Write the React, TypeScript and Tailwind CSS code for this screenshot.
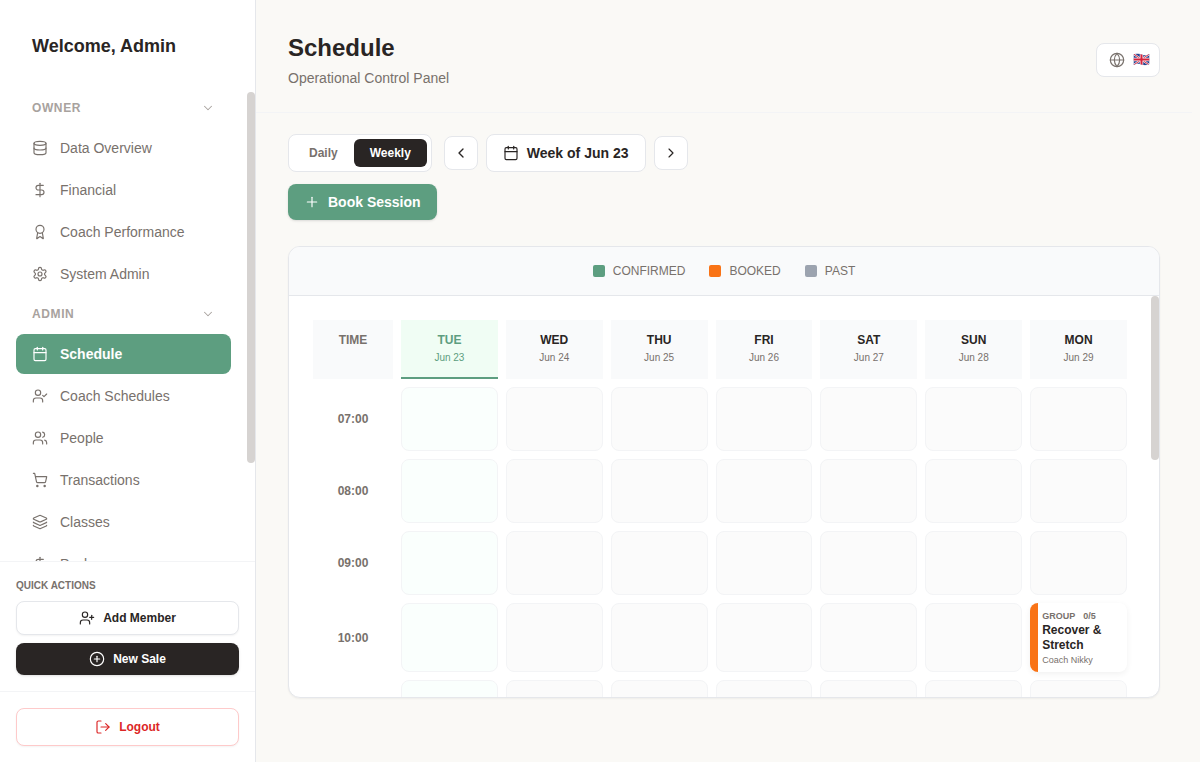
import React, { useState } from "react";
import {
  Award,
  Calendar,
  ChevronDown,
  ChevronLeft,
  ChevronRight,
  CirclePlus,
  Database,
  DollarSign,
  Globe,
  Layers,
  LogOut,
  Plus,
  ShoppingCart,
  UserCheck,
  UserPlus,
  Users,
} from "lucide-react";

interface IconProps {
  size?: number;
  strokeWidth?: number;
}

interface NavItem {
  label: string;
  icon: React.ComponentType<IconProps>;
}

interface NavSection {
  title: string;
  items: NavItem[];
}

interface Session {
  day: string;
  time: string;
  type: string;
  booked: string;
  name: string;
  coach: string;
}

function Gear({ size = 24, strokeWidth = 2 }: IconProps) {
  return (
    <svg
      width={size}
      height={size}
      viewBox="0 0 24 24"
      fill="none"
      stroke="currentColor"
      strokeWidth={strokeWidth}
      strokeLinecap="round"
      strokeLinejoin="round"
      aria-hidden="true"
    >
      <path d="M12.22 2h-.44a2 2 0 0 0-2 2v.18a2 2 0 0 1-1 1.73l-.43.25a2 2 0 0 1-2 0l-.15-.08a2 2 0 0 0-2.73.73l-.22.38a2 2 0 0 0 .73 2.73l.15.1a2 2 0 0 1 1 1.72v.51a2 2 0 0 1-1 1.74l-.15.09a2 2 0 0 0-.73 2.73l.22.38a2 2 0 0 0 2.73.73l.15-.08a2 2 0 0 1 2 0l.43.25a2 2 0 0 1 1 1.73V20a2 2 0 0 0 2 2h.44a2 2 0 0 0 2-2v-.18a2 2 0 0 1 1-1.73l.43-.25a2 2 0 0 1 2 0l.15.08a2 2 0 0 0 2.73-.73l.22-.39a2 2 0 0 0-.73-2.73l-.15-.08a2 2 0 0 1-1-1.74v-.5a2 2 0 0 1 1-1.74l.15-.09a2 2 0 0 0 .73-2.73l-.22-.38a2 2 0 0 0-2.73-.73l-.15.08a2 2 0 0 1-2 0l-.43-.25a2 2 0 0 1-1-1.73V4a2 2 0 0 0-2-2z" />
      <circle cx="12" cy="12" r="3" />
    </svg>
  );
}

const sections: NavSection[] = [
  {
    title: "OWNER",
    items: [
      { label: "Data Overview", icon: Database },
      { label: "Financial", icon: DollarSign },
      { label: "Coach Performance", icon: Award },
      { label: "System Admin", icon: Gear },
    ],
  },
  {
    title: "ADMIN",
    items: [
      { label: "Schedule", icon: Calendar },
      { label: "Coach Schedules", icon: UserCheck },
      { label: "People", icon: Users },
      { label: "Transactions", icon: ShoppingCart },
      { label: "Classes", icon: Layers },
      { label: "Packages", icon: DollarSign },
    ],
  },
];

const days = [
  { name: "TUE", date: "Jun 23", today: true },
  { name: "WED", date: "Jun 24", today: false },
  { name: "THU", date: "Jun 25", today: false },
  { name: "FRI", date: "Jun 26", today: false },
  { name: "SAT", date: "Jun 27", today: false },
  { name: "SUN", date: "Jun 28", today: false },
  { name: "MON", date: "Jun 29", today: false },
];

const hours = ["07:00", "08:00", "09:00", "10:00", "11:00"];

const sessions: Session[] = [
  {
    day: "MON",
    time: "10:00",
    type: "GROUP",
    booked: "0/5",
    name: "Recover & Stretch",
    coach: "Coach Nikky",
  },
];

const legend = [
  { label: "CONFIRMED", color: "bg-[#5d9e80]" },
  { label: "BOOKED", color: "bg-[#f97316]" },
  { label: "PAST", color: "bg-[#9ca3af]" },
];

function UkFlag() {
  return (
    <svg viewBox="0 0 34 30" className="h-[15px] w-[17px] shrink-0" aria-hidden="true">
      <clipPath id="flag">
        <path d="M1 3c6-3 11-2 16 0s10 2 16-1v20c-6 3-11 3-16 1s-10-2-16 1z" />
      </clipPath>
      <g clipPath="url(#flag)">
        <path d="M0 0h34v26H0z" fill="#26418f" />
        <path d="M0 1l34 24M34 1L0 25" stroke="#f1f1f4" strokeWidth="4" />
        <path d="M0 1l34 24M34 1L0 25" stroke="#d9223b" strokeWidth="2" />
        <path d="M17 0v26M0 13h34" stroke="#f1f1f4" strokeWidth="7" />
        <path d="M17 0v26M0 13h34" stroke="#d9223b" strokeWidth="4" />
      </g>
    </svg>
  );
}

function Sidebar() {
  const [active, setActive] = useState("Schedule");

  return (
    <aside className="flex w-64 shrink-0 flex-col border-r border-[#e5e7eb] bg-white">
      <h2 className="p-8 text-lg leading-7 font-bold text-[#292524]">Welcome, Admin</h2>

      <div className="flex min-h-0 flex-1">
        <nav className="flex-1 space-y-1 overflow-y-auto px-4 [scrollbar-width:none]">
          {sections.map((section) => (
            <div key={section.title} className="space-y-1">
              <button className="flex w-full items-center justify-between px-4 py-2 text-xs font-bold tracking-wider text-[#a8a29e]">
                {section.title}
                <ChevronDown size={14} strokeWidth={1.75} />
              </button>
              <div className="space-y-0.5">
                {section.items.map((item) => (
                  <button
                    key={item.label}
                    onClick={() => setActive(item.label)}
                    className={`flex w-full items-center gap-3 rounded-lg px-4 py-2.5 text-sm ${
                      item.label === active
                        ? "bg-[#5d9e80] font-bold text-white"
                        : "text-[#78716c]"
                    }`}
                  >
                    <item.icon size={16} strokeWidth={1.75} />
                    {item.label}
                  </button>
                ))}
              </div>
            </div>
          ))}
        </nav>
        <div className="w-2 shrink-0">
          <div className="h-[79%] rounded-full bg-[#d6d3d1]" />
        </div>
      </div>

      <div className="border-t border-[#f3f4f6] p-4">
        <h3 className="mb-2 text-[10px] leading-[15px] font-bold text-[#78716c]">QUICK ACTIONS</h3>
        <div className="space-y-2">
          <button className="flex w-full items-center justify-center gap-2 rounded-lg border border-[#e5e7eb] bg-white py-2 text-xs font-bold text-[#292524] shadow-xs">
            <UserPlus size={16} strokeWidth={1.75} />
            Add Member
          </button>
          <button className="flex w-full items-center justify-center gap-2 rounded-lg bg-[#292524] py-2 text-xs font-bold text-white shadow-sm">
            <CirclePlus size={16} strokeWidth={1.75} />
            New Sale
          </button>
        </div>
      </div>

      <div className="border-t border-[#f3f4f6] p-4">
        <button className="flex w-full items-center justify-center gap-2 rounded-lg border border-[#fecaca] bg-white py-2.5 text-xs font-bold text-[#dc2626] shadow-xs">
          <LogOut size={16} strokeWidth={1.75} />
          Logout
        </button>
      </div>
    </aside>
  );
}

function Toolbar() {
  const [view, setView] = useState("Weekly");

  return (
    <div className="mb-[26px] flex flex-col items-start gap-3">
      <div className="flex items-center gap-3">
        <div className="flex rounded-lg border border-[#e5e7eb] bg-white p-1">
          {["Daily", "Weekly"].map((v) => (
            <button
              key={v}
              onClick={() => setView(v)}
              className={`rounded-md px-4 py-1.5 text-xs font-bold ${
                v === view ? "bg-[#292524] text-white" : "text-[#78716c]"
              }`}
            >
              {v}
            </button>
          ))}
        </div>
        <div className="flex items-center gap-2">
          <button
            aria-label="Previous week"
            className="rounded-lg border border-[#e5e7eb] bg-white p-2 text-[#292524]"
          >
            <ChevronLeft size={16} strokeWidth={2} />
          </button>
          <button className="flex items-center gap-2 rounded-lg border border-[#e5e7eb] bg-white px-4 py-2 text-sm font-bold text-[#292524]">
            <Calendar size={16} strokeWidth={1.75} />
            Week of Jun 23
          </button>
          <button
            aria-label="Next week"
            className="rounded-lg border border-[#e5e7eb] bg-white p-2 text-[#292524]"
          >
            <ChevronRight size={16} strokeWidth={1.75} />
          </button>
        </div>
      </div>
      <button className="flex items-center gap-2 rounded-lg bg-[#5d9e80] px-4 py-2 text-sm font-bold text-white shadow-sm">
        <Plus size={16} strokeWidth={1.75} />
        Book Session
      </button>
    </div>
  );
}

function SessionCard({ session }: { session: Session }) {
  return (
    <button className="block w-full rounded-lg border-l-8 border-[#f97316] bg-white px-1 pt-1.5 pb-[5px] text-left shadow-[0_2px_6px_rgba(0,0,0,0.06)]">
      <span className="flex gap-2 text-[9px] leading-[14px] font-bold text-[#78716c]">
        <span>{session.type}</span>
        <span>{session.booked}</span>
      </span>
      <span className="block text-xs leading-[15px] font-bold text-[#292524]">{session.name}</span>
      <span className="block text-[9px] leading-[14px] text-[#78716c]">{session.coach}</span>
    </button>
  );
}

function WeekGrid() {
  return (
    <table className="block">
      <thead className="mb-2 block">
        <tr className="grid grid-cols-[80px_repeat(7,minmax(0,1fr))] gap-2">
          <th className="bg-[#f9fafb] py-3 text-xs font-bold text-[#78716c]">TIME</th>
          {days.map((d) => (
            <th
              key={d.name}
              className={`border-b-2 py-3 text-xs font-bold ${
                d.today
                  ? "border-[#5d9e80] bg-[#f0fdf4] text-[#5d9e80]"
                  : "border-[#f9fafb] bg-[#f9fafb] text-[#292524]"
              }`}
            >
              {d.name}
              <div
                className={`mt-0.5 text-[10px] leading-[15px] font-normal ${
                  d.today ? "text-[#5d9e80]" : "text-[#78716c]"
                }`}
              >
                {d.date}
              </div>
            </th>
          ))}
        </tr>
      </thead>
      <tbody className="block space-y-2">
        {hours.map((hour) => (
          <tr key={hour} className="grid grid-cols-[80px_repeat(7,minmax(0,1fr))] gap-2">
            <th className="flex items-center justify-center text-xs font-bold text-[#78716c]">
              {hour}
            </th>
            {days.map((d) => {
              const session = sessions.find((s) => s.day === d.name && s.time === hour);

              if (session) {
                return (
                  <td key={d.name} className="p-0">
                    <SessionCard session={session} />
                  </td>
                );
              }

              return (
                <td
                  key={d.name}
                  className={`min-h-16 rounded-lg border border-[#f3f4f6] p-0 ${
                    d.today ? "bg-[#fafffd]" : "bg-[#fbfbfb]"
                  }`}
                />
              );
            })}
          </tr>
        ))}
      </tbody>
    </table>
  );
}

export default function App() {
  return (
    <div className="flex h-screen bg-[#faf9f6] font-['Liberation_Sans',Arial,sans-serif]">
      <Sidebar />

      <main className="flex min-w-0 flex-1 flex-col pr-2">
        <header className="flex items-center justify-between border-b border-[#f3f4f6] px-8 pt-8 pb-6">
          <div>
            <h1 className="text-2xl font-bold text-[#292524]">Schedule</h1>
            <p className="mt-1 text-sm text-[#78716c]">Operational Control Panel</p>
          </div>
          <button
            aria-label="Change language"
            className="flex h-[34px] w-16 items-center gap-2 rounded-lg border border-[#e5e7eb] bg-white pl-3 text-[#78716c]"
          >
            <Globe size={16} strokeWidth={1.75} className="shrink-0" />
            <UkFlag />
          </button>
        </header>

        <div className="flex min-h-0 flex-1 flex-col px-8 pt-[21px] pb-16">
          <Toolbar />

          <section className="flex min-h-0 flex-1 flex-col overflow-hidden rounded-xl border border-[#e5e7eb] bg-white shadow-xs">
            <div className="flex justify-center gap-6 border-b border-[#e5e7eb] bg-[#f9fafb] py-4">
              {legend.map((item) => (
                <div key={item.label} className="flex items-center gap-2 text-xs text-[#78716c]">
                  <span className={`size-3 rounded-xs ${item.color}`} />
                  {item.label}
                </div>
              ))}
            </div>
            <div className="flex min-h-0 flex-1">
              <div className="flex-1 overflow-y-auto p-6 [scrollbar-width:none]">
                <WeekGrid />
              </div>
              <div className="w-2 shrink-0">
                <div className="h-[41%] rounded-full bg-[#d6d3d1]" />
              </div>
            </div>
          </section>
        </div>
      </main>
    </div>
  );
}
